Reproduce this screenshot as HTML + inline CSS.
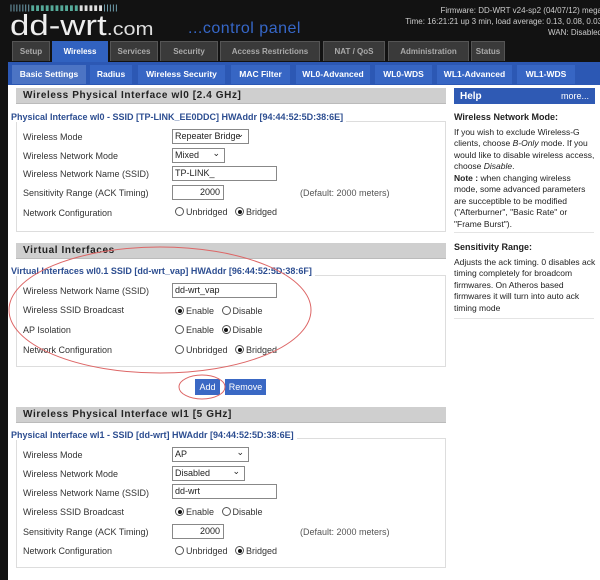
<!DOCTYPE html>
<html><head><style>
*{margin:0;padding:0;box-sizing:border-box}
body{width:600px;height:580px;background:#121212;position:relative;overflow:hidden;font-family:"Liberation Sans",sans-serif;font-size:9px;color:#222}
.a{position:absolute;white-space:nowrap}
.t1{position:absolute;top:41px;height:20px;background:#3a3a3a;color:#aaa;font-weight:bold;font-size:8px;text-align:center;line-height:20px;border:1px solid #555;border-bottom:none;overflow:hidden}
.t2{position:absolute;top:65px;height:19px;background:#3766c4;color:#fff;font-weight:bold;font-size:8.5px;text-align:center;line-height:19px}
.hd{position:absolute;left:16px;width:430px;height:16px;background:#cfcfcf;border-bottom:1px solid #bbb;font-weight:bold;font-size:10px;letter-spacing:.6px;padding-left:7px;line-height:16px;color:#222}
.lg{position:absolute;left:11px;color:#2d4e91;font-weight:bold;font-size:9px;background:#fff;padding-right:3px}
.fs{position:absolute;left:16px;width:430px;border:1px solid #ddd}
.lb{position:absolute;left:23px;color:#333}
.in{position:absolute;left:172px;height:15px;border:1px solid #888;background:#fff;padding-left:2px;line-height:13px;font-size:9px}
.r{display:inline-block;width:9px;height:9px;border:1px solid #555;border-radius:50%;vertical-align:-1px;margin-right:2px;position:relative;background:#fff}
.r.on::after{content:"";position:absolute;left:1.5px;top:1.5px;width:4px;height:4px;border-radius:50%;background:#111}
.rad{position:absolute;left:175px;color:#333}
.sel::after{content:"⌄";position:absolute;right:4px;top:-2px;font-size:9px}
.help p{margin:0}
</style></head><body>
<div class="a" style="left:10px;top:4px;color:#7ab;font-size:7px;letter-spacing:1px;font-weight:bold">|||||||<span style="color:#5a9">▮▮▮▮▮▮▮▮▮▮</span><span style="color:#ddd">▮▮▮▮▮</span>|||||</div>
<div class="a" style="left:10px;top:11px;color:#eee;font-size:29px;letter-spacing:0px;transform:scaleX(1.2);transform-origin:left top;line-height:30px">dd-wrt<span style="font-size:18px;color:#ddd">.com</span></div>
<div class="a" style="left:188px;top:20px;color:#3667c8;font-size:16px;letter-spacing:.5px">...control panel</div>
<div class="a" style="right:-2px;top:5px;color:#ccc;font-size:8px;text-align:right;line-height:11px">Firmware: DD-WRT v24-sp2 (04/07/12) mega<br>Time: 16:21:21 up 3 min, load average: 0.13, 0.08, 0.03<br>WAN: Disabled</div>
<div class="t1" style="left:12px;width:38px">Setup</div>
<div class="t1" style="left:52px;width:56px;background:#3162c0;color:#fff;border-color:#3162c0;height:22px">Wireless</div>
<div class="t1" style="left:110px;width:48px">Services</div>
<div class="t1" style="left:160px;width:58px">Security</div>
<div class="t1" style="left:220px;width:100px">Access Restrictions</div>
<div class="t1" style="left:323px;width:62px">NAT / QoS</div>
<div class="t1" style="left:388px;width:81px">Administration</div>
<div class="t1" style="left:471px;width:34px">Status</div>
<div class="a" style="left:8px;top:62px;width:592px;height:23px;background:#2c58b4"></div>
<div class="t2" style="left:12px;width:74px;background:#4c74c4">Basic Settings</div>
<div class="t2" style="left:90px;width:42px">Radius</div>
<div class="t2" style="left:138px;width:87px">Wireless Security</div>
<div class="t2" style="left:231px;width:59px">MAC Filter</div>
<div class="t2" style="left:296px;width:74px">WL0-Advanced</div>
<div class="t2" style="left:375px;width:57px">WL0-WDS</div>
<div class="t2" style="left:437px;width:75px">WL1-Advanced</div>
<div class="t2" style="left:517px;width:58px">WL1-WDS</div>
<div class="a" style="left:8px;top:85px;width:592px;height:495px;background:#fff"></div>

<div class="hd" style="top:88px">Wireless Physical Interface wl0 [2.4 GHz]</div>
<div class="fs" style="top:121px;height:111px"></div>
<div class="lg" style="top:112px">Physical Interface wl0 - SSID [TP-LINK_EE0DDC] HWAddr [94:44:52:5D:38:6E]</div>
<div class="lb" style="top:132px">Wireless Mode</div><div class="in sel" style="top:129px;width:77px">Repeater Bridge</div>
<div class="lb" style="top:151px">Wireless Network Mode</div><div class="in sel" style="top:148px;width:53px">Mixed</div>
<div class="lb" style="top:169px">Wireless Network Name (SSID)</div><div class="in" style="top:166px;width:105px">TP-LINK_</div>
<div class="lb" style="top:188px">Sensitivity Range (ACK Timing)</div><div class="in" style="top:185px;width:52px;text-align:right;padding-right:3px">2000</div>
<div class="a" style="left:300px;top:188px;color:#555">(Default: 2000 meters)</div>
<div class="lb" style="top:208px">Network Configuration</div><div class="rad" style="top:207px"><span class="r"></span>Unbridged &nbsp; <span class="r on"></span>Bridged</div>

<div class="hd" style="top:243px">Virtual Interfaces</div>
<div class="fs" style="top:275px;height:92px"></div>
<div class="lg" style="top:266px">Virtual Interfaces wl0.1 SSID [dd-wrt_vap] HWAddr [96:44:52:5D:38:6F]</div>
<div class="lb" style="top:286px">Wireless Network Name (SSID)</div><div class="in" style="top:283px;width:105px">dd-wrt_vap</div>
<div class="lb" style="top:305px">Wireless SSID Broadcast</div><div class="rad" style="top:306px"><span class="r on"></span>Enable &nbsp; <span class="r"></span>Disable</div>
<div class="lb" style="top:325px">AP Isolation</div><div class="rad" style="top:325px"><span class="r"></span>Enable &nbsp; <span class="r on"></span>Disable</div>
<div class="lb" style="top:345px">Network Configuration</div><div class="rad" style="top:345px"><span class="r"></span>Unbridged &nbsp; <span class="r on"></span>Bridged</div>
<div class="a" style="left:195px;top:379px;width:25px;height:16px;background:#3a68c4;color:#fff;text-align:center;line-height:16px">Add</div>
<div class="a" style="left:225px;top:379px;width:41px;height:16px;background:#3a68c4;color:#fff;text-align:center;line-height:16px">Remove</div>

<div class="hd" style="top:407px">Wireless Physical Interface wl1 [5 GHz]</div>
<div class="fs" style="top:438px;height:130px"></div>
<div class="lg" style="top:430px">Physical Interface wl1 - SSID [dd-wrt] HWAddr [94:44:52:5D:38:6E]</div>
<div class="lb" style="top:450px">Wireless Mode</div><div class="in sel" style="top:447px;width:77px">AP</div>
<div class="lb" style="top:469px">Wireless Network Mode</div><div class="in sel" style="top:466px;width:73px">Disabled</div>
<div class="lb" style="top:488px">Wireless Network Name (SSID)</div><div class="in" style="top:484px;width:105px">dd-wrt</div>
<div class="lb" style="top:507px">Wireless SSID Broadcast</div><div class="rad" style="top:507px"><span class="r on"></span>Enable &nbsp; <span class="r"></span>Disable</div>
<div class="lb" style="top:527px">Sensitivity Range (ACK Timing)</div><div class="in" style="top:524px;width:52px;text-align:right;padding-right:3px">2000</div>
<div class="a" style="left:300px;top:527px;color:#555">(Default: 2000 meters)</div>
<div class="lb" style="top:546px">Network Configuration</div><div class="rad" style="top:546px"><span class="r"></span>Unbridged &nbsp; <span class="r on"></span>Bridged</div>

<div class="a" style="left:454px;top:88px;width:141px;height:16px;background:#2f5ab4;color:#fff;line-height:16px;padding:0 6px"><b style="font-size:10px">Help</b><span style="float:right">more...</span></div>
<div class="a help" style="left:454px;top:112px;width:142px;white-space:normal;line-height:11.5px;color:#222;font-size:8.5px">
<p style="font-weight:bold;margin-bottom:3px;font-size:9px">Wireless Network Mode:</p>
<p>If you wish to exclude Wireless-G clients, choose <i>B-Only</i> mode. If you would like to disable wireless access, choose <i>Disable</i>.<br><b>Note :</b> when changing wireless mode, some advanced parameters are succeptible to be modified ("Afterburner", "Basic Rate" or "Frame Burst").</p>
</div>
<div class="a" style="left:454px;top:232px;width:140px;border-top:1px solid #e4e4e4"></div>
<div class="a help" style="left:454px;top:242px;width:142px;white-space:normal;line-height:11.5px;color:#222;font-size:8.5px">
<p style="font-weight:bold;margin-bottom:3px;font-size:9px">Sensitivity Range:</p>
<p>Adjusts the ack timing. 0 disables ack timing completely for broadcom firmwares. On Atheros based firmwares it will turn into auto ack timing mode</p>
</div>
<div class="a" style="left:454px;top:318px;width:140px;border-top:1px solid #e4e4e4"></div>

<svg class="a" style="left:0;top:0" width="600" height="580">
<ellipse cx="160" cy="310" rx="151" ry="63" fill="none" stroke="#d66" stroke-width="1"/>
<ellipse cx="202" cy="387" rx="23" ry="12" fill="none" stroke="#d66" stroke-width="1"/>
</svg>
</body></html>
